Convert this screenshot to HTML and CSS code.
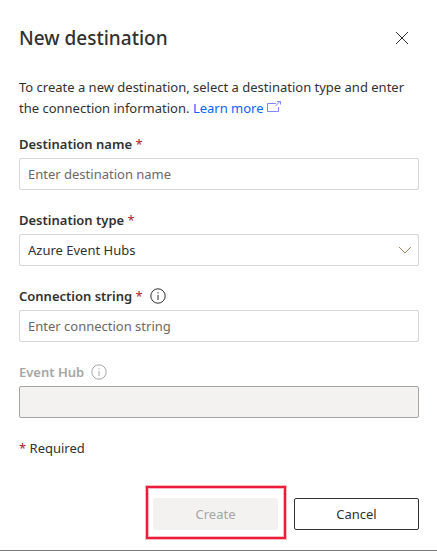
FILE: index.html
```html
<!DOCTYPE html>
<html lang="en">
<head>
<meta charset="utf-8">
<meta name="viewport" content="width=device-width, initial-scale=1">
<title>New destination</title>
<link rel="stylesheet" href="styles.css">
</head>
<body>
<main class="panel">
  <header class="panel-header">
    <h1 class="title">New destination</h1>
    <button class="close" type="button" aria-label="Close">
      <svg width="14" height="14" viewBox="0 0 14 14" aria-hidden="true"><path d="M1 1l12 12M13 1L1 13"/></svg>
    </button>
  </header>
  <p class="intro">To create a new destination, select a destination type and enter the connection information. <a class="link" href="#">Learn more <svg class="external" width="14" height="12" viewBox="0 0 14 12" aria-hidden="true"><path d="M9 2.5H.5v8h11V6M8.500 5l4.500-4.500M10 .5h3.500V3.500"/></svg></a></p>
  <form class="form">
    <div class="field">
      <div class="label-row"><label for="name">Destination name <span class="star">*</span></label></div>
      <input class="control" id="name" type="text" placeholder="Enter destination name">
    </div>
    <div class="field">
      <div class="label-row"><label for="type">Destination type <span class="star">*</span></label></div>
      <div class="select-wrap">
        <select class="control" id="type"><option>Azure Event Hubs</option></select>
        <svg class="chevron" width="14" height="8" viewBox="0 0 14 8" aria-hidden="true"><path d="M1 1l6 6 6-6"/></svg>
      </div>
    </div>
    <div class="field">
      <div class="label-row">
        <label for="connection">Connection string <span class="star">*</span></label>
        <svg class="info" width="16" height="16" viewBox="0 0 16 16" aria-hidden="true"><circle cx="8" cy="8" r="7.2"/><path d="M8 7v5M8 4.200v1.300"/></svg>
      </div>
      <input class="control" id="connection" type="text" placeholder="Enter connection string">
    </div>
    <div class="field field-disabled">
      <div class="label-row">
        <label for="hub">Event Hub</label>
        <svg class="info" width="16" height="16" viewBox="0 0 16 16" aria-hidden="true"><circle cx="8" cy="8" r="7.2"/><path d="M8 7v5M8 4.200v1.300"/></svg>
      </div>
      <input class="control" id="hub" type="text" disabled>
    </div>
    <p class="required"><span class="star">*</span> Required</p>
    <div class="actions">
      <div class="highlight"><button class="button button-create" type="submit" disabled>Create</button></div>
      <button class="button button-cancel" type="button">Cancel</button>
    </div>
  </form>
</main>
</body>
</html>
```
FILE: styles.css
```css
* {
  box-sizing: border-box;
}

body {
  margin: 0;
  background: #fff;
  color: #323130;
  font: 13px/20px "Noto Sans", "Open Sans", sans-serif;
}

.panel {
  padding: 22px 18px 20px 19px;
  border-bottom: 1px solid #7a7a7a;
}

.panel-header {
  display: flex;
  align-items: center;
  justify-content: space-between;
}

.title {
  margin: 0;
  font-size: 19px;
  line-height: 32px;
  font-weight: 500;
}

.close {
  display: flex;
  padding: 9px 10px;
  margin: 0;
  border: 0;
  background: none;
  color: #323130;
}

svg {
  fill: none;
  stroke: currentColor;
}

.intro {
  margin: 23px 0 15px;
  line-height: 21px;
}

.link {
  color: #0f62fe;
  text-decoration: none;
}

.external {
  color: #8286ff;
}

.form {
  display: flex;
  flex-direction: column;
  gap: 20px;
}

.field {
  display: flex;
  flex-direction: column;
  gap: 4px;
}

.label-row {
  display: flex;
  align-items: center;
  gap: 7px;
  font-weight: 600;
}

.star {
  color: #a4262c;
  font-weight: 400;
}

.control {
  display: block;
  width: 100%;
  height: 32px;
  margin: 0;
  padding: 0 8px;
  border: 1px solid #d6d6d6;
  border-radius: 2px;
  background: #fff;
  color: #323130;
  font: inherit;
  appearance: none;
}

.control::placeholder {
  color: #6b6967;
  opacity: 1;
}

.select-wrap {
  position: relative;
}

.chevron {
  position: absolute;
  top: 12px;
  right: 7px;
  color: #a98467;
  pointer-events: none;
}

.field-disabled {
  color: #a6a5a3;
}

.field-disabled .control {
  border-color: #a6a5a3;
  background: #f3f2f1;
}

.required {
  margin: 0;
}

.actions {
  display: flex;
  justify-content: flex-end;
  gap: 16px;
  margin-top: 20px;
}

.highlight {
  position: relative;
}

.highlight::before {
  content: "";
  position: absolute;
  inset: -12px -8px -9px -7px;
  border: 2px solid #ed1c3a;
  box-shadow: 0 0 0 1px #f8b8c0, inset 0 0 0 1px #f8b8c0;
  pointer-events: none;
}

.button {
  display: block;
  width: 125px;
  height: 32px;
  padding: 0;
  border-radius: 2px;
  font: inherit;
}

.button-create {
  border: 0;
  background: #f3f2f1;
  color: #a6a5a3;
}

.button-cancel {
  border: 1px solid #323130;
  background: #fff;
  color: #323130;
}
```
